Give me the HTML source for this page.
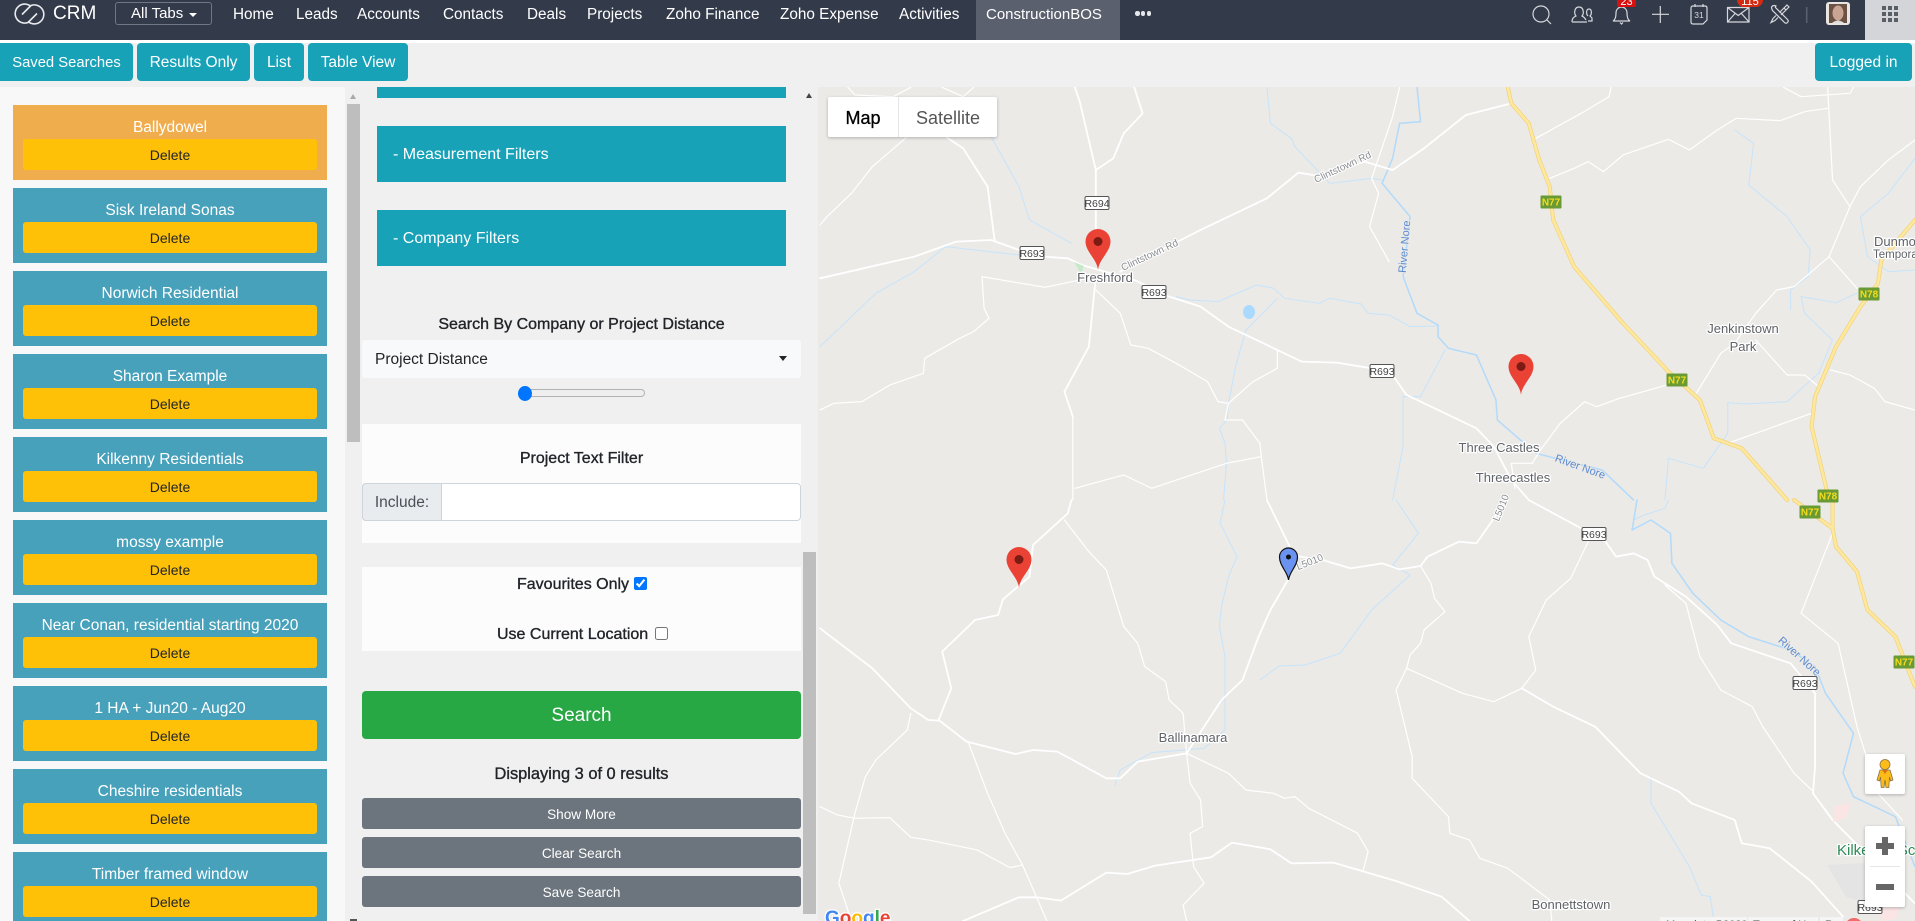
<!DOCTYPE html>
<html lang="en">
<head>
<meta charset="utf-8">
<title>ConstructionBOS</title>
<style>
html,body{margin:0;padding:0;width:1915px;height:921px;overflow:hidden;background:#f0f0f0;font-family:"Liberation Sans",sans-serif;color:#212529}
.a{position:absolute;box-sizing:border-box}
.nav{position:absolute;top:0;left:0;width:1915px;height:40px;background:#333a4a}
.nt{position:absolute;top:4px;color:#fff;font-size:15.3px;line-height:22px;white-space:nowrap}
.tb{position:absolute;top:43px;height:38px;background:#17a2b8;color:#fff;border-radius:4px;font-size:15.5px;line-height:40px;text-align:center;white-space:nowrap}
.card{position:absolute;left:13px;width:314px;height:75px;background:#47a1bb;color:#fff;font-size:15.5px;text-align:center}
.card span{position:absolute;left:0;right:0;top:13px;line-height:20px;white-space:nowrap}
.card b{position:absolute;left:10px;top:34px;width:294px;height:31px;background:#ffc107;border-radius:3px;color:#212529;font-weight:normal;font-size:14px;line-height:33px}
.teal{position:absolute;box-sizing:border-box;left:377px;width:409px;background:#17a2b8;color:#fff;font-size:16px}
.lab{position:absolute;left:362px;width:439px;text-align:center;font-size:16px;line-height:20px;-webkit-text-stroke:.35px #212529;white-space:nowrap}
.gb{position:absolute;left:362px;width:439px;height:31px;background:#6c757d;color:#fff;border-radius:3px;text-align:center;font-size:13.6px;line-height:33px}
#map polyline{fill:none;vector-effect:non-scaling-stroke;stroke-linejoin:round;stroke-linecap:round}
.w polyline{stroke:#fff;stroke-width:1.8}
.t polyline{stroke:#fff;stroke-width:1.2}
.r polyline{stroke:#c6e4fb;stroke-width:1}
.rm polyline{stroke:#b2dafb;stroke-width:1.5}
.y1 polyline{stroke:#f2d272;stroke-width:4}
.y2 polyline{stroke:#fee8a0;stroke-width:2.6}
.pl{font-family:"Liberation Sans",sans-serif;font-size:13px;fill:#5f6368;stroke:#fff;stroke-width:2.5px;paint-order:stroke;stroke-linejoin:round;text-anchor:middle}
.rv{font-size:11px;fill:#5b8ad0;stroke:#ebeae7;stroke-width:1.5px;paint-order:stroke;text-anchor:middle;font-family:"Liberation Sans",sans-serif}
.rd{font-size:10px;fill:#8a8d91;stroke:#fff;stroke-width:2px;paint-order:stroke;text-anchor:middle;font-family:"Liberation Sans",sans-serif}
.sr rect{fill:#fff;stroke:#555;stroke-width:1}
.sr text{font-size:10.5px;fill:#444;text-anchor:middle;font-family:"Liberation Sans",sans-serif}
.sn rect{fill:#6a9a33}
.sn text{font-size:10px;fill:#f5dc1c;text-anchor:middle;font-weight:bold;font-family:"Liberation Sans",sans-serif}
</style>
</head>
<body>

<div class="nav">
  <svg class="a" style="left:12px;top:2px" width="36" height="24" viewBox="0 0 36 24" fill="none" stroke="#e8e9ec" stroke-width="1.6">
    <path d="M19 4.500A9.500 9.500 0 1 0 16 20.500l9-9"/>
    <path d="M16 19.500A9.500 9.500 0 1 0 19 3.500l-9 9"/>
  </svg>
  <div class="nt" style="left:53px;top:3px;font-size:19px;line-height:22px">CRM</div>
  <div class="a" style="left:115px;top:2px;width:97px;height:23px;border:1px solid #6f7684;border-radius:3px"></div>
  <div class="nt" style="left:131px;top:3px;font-size:15px">All Tabs</div>
  <div class="a" style="left:189px;top:13px;width:0;height:0;border-left:4px solid transparent;border-right:4px solid transparent;border-top:4px solid #fff"></div>
  <div class="nt" style="left:233px">Home</div>
  <div class="nt" style="left:296px">Leads</div>
  <div class="nt" style="left:357px">Accounts</div>
  <div class="nt" style="left:443px">Contacts</div>
  <div class="nt" style="left:527px">Deals</div>
  <div class="nt" style="left:587px">Projects</div>
  <div class="nt" style="left:666px">Zoho Finance</div>
  <div class="nt" style="left:780px">Zoho Expense</div>
  <div class="nt" style="left:899px">Activities</div>
  <div class="a" style="left:976px;top:0;width:144px;height:40px;background:#5a606d"></div>
  <div class="nt" style="left:986px;font-size:15px">ConstructionBOS</div>
  <div class="a" style="left:1135px;top:11px;width:16px;height:6px;display:flex;justify-content:space-between">
    <i style="width:4.500px;height:4.500px;background:#e6e7ea;border-radius:50%"></i><i style="width:4.500px;height:4.500px;background:#e6e7ea;border-radius:50%"></i><i style="width:4.500px;height:4.500px;background:#e6e7ea;border-radius:50%"></i>
  </div>

  <svg class="a" style="left:1520px;top:0" width="345" height="40" viewBox="1520 0 345 40" fill="none" stroke="#d6d8dc" stroke-width="1.200">
    <circle cx="1541" cy="14" r="8"/><path d="M1547 20l4 4"/>
    <path d="M1572 22c0-4 2-5 4-6-2-2-2-9 3-9s5 7 3 9c2 1 3 2 4 4M1572 22h15"/><path d="M1588 16c-2-2-2-7 1-7s3 5 1 7l2 2v3h-4"/>
    <path d="M1613 21c2-1 3-3 3-8 0-4 3-6 5.500-6s5.500 2 5.500 6c0 5 1 7 3 8zM1620 22.500l1.500 1.500 1.500-1.500"/>
    <path d="M1660.300 6v17M1652 14.300h17"/>
    <path d="M1691 8q0-2 2-2h12q2 0 2 2v12l-4 4h-10q-2 0-2-2zM1695 4v3M1703 4v3"/>
    <path d="M1727.500 7.500h21.500v14.500h-21.500zM1727.500 7.500l10.700 8 10.800-8M1727.500 22l8-9M1749 22l-8-9"/>
    <path d="M1776 6c-2-1-4-.5-4.500 1.500 0 1 .5 2 1 3l12 12c1 1 2 1 3 0s1-2 0-3l-12-12c-.5-1 0-1 .5-1.500z"/>
    <path d="M1787 5l2 2-3 3-2-2zM1784 8l-4.500 4.500M1776 15.500l-3 3-2 4 4-2 3-3M1781 15l5-5"/>
    <path d="M1806.700 7v16" stroke="#5c6270" stroke-width="1.500"/>
  </svg>
  <div class="a" style="left:1693px;top:9px;width:12px;height:12px;color:#d6d8dc;font-size:8.500px;line-height:12px;text-align:center">31</div>
  <div class="a" style="left:1617px;top:0;width:19px;height:7px;background:#d80f0f;border-radius:0 0 2px 2px;overflow:hidden;color:#fff;font-size:11px;line-height:5px;text-align:center">23</div>
  <div class="a" style="left:1737px;top:0;width:26px;height:7px;background:#d42a12;border-radius:0 0 7px 7px;overflow:hidden;color:#fff;font-size:11px;line-height:5px;text-align:center">115</div>
  <svg class="a" style="left:1826px;top:2px" width="24" height="23" viewBox="0 0 24 23">
    <rect width="24" height="23" rx="3" fill="#e9e5e0"/>
    <rect x="3" y="2" width="18" height="19" fill="#6b5244"/>
    <ellipse cx="12" cy="11" rx="5.500" ry="7.500" fill="#c9a492"/>
    <path d="M6 21q6-5 12 0z" fill="#ddd"/>
  </svg>
  <div class="a" style="left:1865px;top:0;width:50px;height:40px;background:#d3d5d9"></div>
  <svg class="a" style="left:1882px;top:6px" width="16" height="16" viewBox="0 0 16 16" fill="#5a5e67">
    <rect width="4" height="4"/><rect x="6" width="4" height="4"/><rect x="12" width="4" height="4"/>
    <rect y="6" width="4" height="4"/><rect x="6" y="6" width="4" height="4"/><rect x="12" y="6" width="4" height="4"/>
    <rect y="12" width="4" height="4"/><rect x="6" y="12" width="4" height="4"/><rect x="12" y="12" width="4" height="4"/>
  </svg>
</div>
<div class="a" style="left:0;top:40px;width:1915px;height:3px;background:#fff"></div>

<div class="tb" style="left:0;width:133px;border-radius:0 4px 4px 0;font-size:14.800px">Saved Searches</div>
<div class="tb" style="left:137px;width:113px">Results Only</div>
<div class="tb" style="left:254px;width:50px">List</div>
<div class="tb" style="left:308px;width:100px">Table View</div>
<div class="tb" style="left:1815px;width:97px">Logged in</div>

<!-- left panel -->
<div class="a" style="left:0;top:87px;width:345px;height:834px;background:#f8f8f8;overflow:hidden">
  <div class="card" style="top:18px;background:#f0ad4e"><span>Ballydowel</span><b>Delete</b></div>
  <div class="card" style="top:101px"><span>Sisk Ireland Sonas</span><b>Delete</b></div>
  <div class="card" style="top:184px"><span>Norwich Residential</span><b>Delete</b></div>
  <div class="card" style="top:267px"><span>Sharon Example</span><b>Delete</b></div>
  <div class="card" style="top:350px"><span>Kilkenny Residentials</span><b>Delete</b></div>
  <div class="card" style="top:433px"><span>mossy example</span><b>Delete</b></div>
  <div class="card" style="top:516px"><span>Near Conan, residential starting 2020</span><b>Delete</b></div>
  <div class="card" style="top:599px"><span>1 HA + Jun20 - Aug20</span><b>Delete</b></div>
  <div class="card" style="top:682px"><span>Cheshire residentials</span><b>Delete</b></div>
  <div class="card" style="top:765px"><span>Timber framed window</span><b>Delete</b></div>
</div>
<div class="a" style="left:347px;top:104px;width:13px;height:338px;background:#bebebe"></div>
<div class="a" style="left:350px;top:94px;width:0;height:0;border-left:3.500px solid transparent;border-right:3.500px solid transparent;border-bottom:5px solid #a9a9a9"></div>
<div class="a" style="left:350px;top:919px;width:7px;height:2px;background:#555"></div>

<!-- middle column -->
<div class="teal" style="top:87px;height:11px"></div>
<div class="teal" style="top:126px;height:56px;line-height:58px;padding-left:16px">- Measurement Filters</div>
<div class="teal" style="top:210px;height:56px;line-height:58px;padding-left:16px">- Company Filters</div>

<div class="lab" style="top:315px">Search By Company or Project Distance</div>
<div class="a" style="left:362px;top:340px;width:439px;height:38px;background:#f8f9fa;border-radius:3px;font-size:15.500px;line-height:40px;padding-left:13px">Project Distance</div>
<div class="a" style="left:779px;top:356px;width:0;height:0;border-left:4px solid transparent;border-right:4px solid transparent;border-top:5px solid #212529"></div>
<div class="a" style="left:520px;top:389px;width:125px;height:8px;background:#efefef;border:1px solid #b2b2b2;border-radius:4px"></div>
<div class="a" style="left:518px;top:386px;width:14px;height:15px;background:#0075ff;border-radius:50%"></div>

<div class="a" style="left:362px;top:424px;width:439px;height:119px;background:#fcfcfd"></div>
<div class="lab" style="top:449px">Project Text Filter</div>
<div class="a" style="left:362px;top:483px;width:439px;height:38px;background:#fff;border:1px solid #ced4da;border-radius:4px"></div>
<div class="a" style="left:362px;top:483px;width:80px;height:38px;background:#e9ecef;border:1px solid #ced4da;border-radius:4px 0 0 4px;font-size:15.500px;line-height:38px;text-align:center;color:#495057">Include:</div>

<div class="a" style="left:362px;top:567px;width:439px;height:84px;background:#fcfcfd"></div>
<div class="lab" style="top:575px;left:517px;width:auto">Favourites Only</div>
<input class="a" type="checkbox" checked style="left:634px;top:577px;width:13px;height:13px;margin:0">
<div class="lab" style="top:625px;left:497px;width:auto">Use Current Location</div>
<input class="a" type="checkbox" style="left:655px;top:627px;width:13px;height:13px;margin:0">

<div class="a" style="left:362px;top:691px;width:439px;height:48px;background:#28a745;border-radius:4px;color:#fff;font-size:19px;line-height:50px;text-align:center">Search</div>
<div class="lab" style="top:764px;font-size:16.400px">Displaying 3 of 0 results</div>
<div class="gb" style="top:798px">Show More</div>
<div class="gb" style="top:837px">Clear Search</div>
<div class="gb" style="top:876px">Save Search</div>

<div class="a" style="left:803px;top:552px;width:13px;height:362px;background:#bebebe"></div>
<div class="a" style="left:806px;top:93px;width:0;height:0;border-left:3.500px solid transparent;border-right:3.500px solid transparent;border-bottom:5px solid #444"></div>

<!-- map -->
<svg id="map" class="a" style="left:818px;top:87px;background:#ebeae7" width="1097" height="834" viewBox="818 87 1097 834">
  <!-- Upper part, traced -->
  <g transform="translate(820,80) scale(.6983,.3333)">
    <g class="r">
      <polyline points="640,22 645,130 675,175 680,200 730,310 790,295 805,300"/>
      <polyline points="245,170 285,320 300,420 360,490"/>
      <polyline points="0,800 80,640 135,575 180,500 285,525"/>
      <polyline points="510,650 530,660 570,665 625,615 650,625 665,655 715,670 730,655 775,672 785,700 815,705 845,740 885,738"/>
      <polyline points="655,655 610,750 595,860 585,970 583,1020 572,1045 580,1090 582,1150 578,1260"/>
      <polyline points="895,810 860,950 835,950 835,1100 820,1260"/>
      <polyline points="1310,150 1337,190 1330,315 1385,410 1418,510 1415,590 1390,630 1390,690"/>
      <polyline points="1568,235 1530,340 1490,410 1500,530 1530,575 1568,570"/>
      <polyline points="1405,650 1455,668 1485,640"/>
      <polyline points="1405,650 1410,700 1450,780 1430,880 1385,965 1325,972 1300,968 1300,1060 1265,1165 1215,1135 1210,1260"/>
    </g>
    <g class="rm">
      <polyline points="855,22 860,125 830,130 820,235 805,310 845,410 835,590 855,700 885,735 885,770 900,805 940,825 968,960 970,1020 1025,1120 1120,1170 1165,1260"/>
    </g>
    <g class="t">
      <polyline points="395,630 430,700 445,795 470,805 510,850 555,905 570,965 585,970 620,905 655,865 655,810"/>
      <polyline points="232,590 322,622 395,590"/>
      <polyline points="232,590 235,685 242,715 220,755 200,775 150,835 148,880 100,915 60,965 20,970 0,990"/>
      <polyline points="125,170 75,260 45,340 10,410 0,435"/>
      <polyline points="585,970 580,1020 605,1020 630,1090 632,1130 640,1260"/>
      <polyline points="632,1130 582,1150 475,1225 435,1185 365,1225"/>
      <polyline points="830,22 820,110 790,295 800,340 787,440 815,545"/>
      <polyline points="1025,175 1090,100 1110,75 1130,50 1133,22"/>
      <polyline points="1045,295 1080,265 1100,245 1122,275 1150,225 1215,178 1245,210 1285,150 1312,115 1375,122 1410,95 1443,85"/>
      <polyline points="1443,22 1445,100 1450,300 1475,380 1445,530 1485,625"/>
      <polyline points="1475,380 1490,320 1530,240 1568,180"/>
      <polyline points="1380,22 1405,50 1475,40 1480,22"/>
      <polyline points="1445,530 1395,620 1370,630 1340,700 1310,790 1290,820 1255,940"/>
      <polyline points="1340,780 1385,885 1410,885 1430,920"/>
      <polyline points="1447,870 1475,885 1510,925 1525,965 1568,990"/>
      <polyline points="1213,915 1145,955 1112,980 1095,965 1060,1030 1030,1115 1020,1150 990,1150 995,1225"/>
      <polyline points="1300,1090 1420,1000"/>
      <polyline points="40,22 50,45 105,50 130,22"/>
      <polyline points="175,22 205,50 220,22"/>
      <polyline points="362,1010 362,1260"/>
    </g>
    <g class="w">
      <polyline points="0,595 135,530 195,485 245,480 285,510 320,530 355,535 375,555 450,600 500,650 545,680 585,740 690,845 740,848 790,865 820,885 840,945 940,1045 965,1100 990,1200 1015,1260"/>
      <polyline points="430,575 470,530 545,450 640,355 685,278 715,288 780,245 820,270 865,205 925,105 990,70"/>
      <polyline points="365,22 372,65 395,270 395,450"/>
      <polyline points="450,22 462,100 435,160 420,235 395,270"/>
      <polyline points="395,590 385,800 350,935 362,1010"/>
      <polyline points="250,480 240,320 205,205 180,170"/>
    </g>
    <g class="y1">
      <polyline points="985,22 990,70 1015,130 1030,240 1045,320 1050,420 1080,560 1150,730 1215,875 1260,960 1280,1075 1320,1105 1385,1260"/>
      <polyline points="1568,420 1520,540 1515,610 1490,680 1455,800 1425,950 1420,1040 1445,1260"/>
    </g>
    <g class="y2">
      <polyline points="985,22 990,70 1015,130 1030,240 1045,320 1050,420 1080,560 1150,730 1215,875 1260,960 1280,1075 1320,1105 1385,1260"/>
      <polyline points="1568,420 1520,540 1515,610 1490,680 1455,800 1425,950 1420,1040 1445,1260"/>
    </g>
  </g>
  <!-- Lower part, traced -->
  <g transform="translate(820,500) scale(.6983,.3333)">
    <g class="r">
      <polyline points="580,0 573,70 597,170 585,230 575,320 572,380 580,470 580,690 550,745 475,758 430,810 422,855"/>
      <polyline points="825,0 857,100 820,195 845,225 790,330 745,460 695,495 658,498 630,540"/>
      <polyline points="1190,830 1190,910 1245,1100 1262,1185 1275,1190 1280,1263"/>
      <polyline points="1215,0 1210,25 1180,45 1165,60"/>
    </g>
    <g class="rm">
      <polyline points="1170,0 1163,90 1190,60 1218,100 1220,190 1250,280 1290,360 1330,410 1390,450 1425,500 1440,580 1480,700 1465,820 1480,890 1540,950 1568,1100"/>
    </g>
    <g class="t">
      <polyline points="350,60 385,155 410,210 435,380 455,430 465,500 495,545 500,600 520,640 525,760"/>
      <polyline points="130,640 125,690 80,780 65,830 50,940 27,1150 45,1263"/>
      <polyline points="212,725 240,880 265,1000 290,1095 325,1263"/>
      <polyline points="0,920 25,945 50,955 100,953 130,1012 155,1020 225,1050 272,1103 290,1095"/>
      <polyline points="840,505 920,580 965,605 1005,565 1025,510 1015,410 1040,300 1075,235 1100,125"/>
      <polyline points="1210,255 1240,310 1260,470 1290,570 1335,620 1350,680 1395,820 1420,870"/>
      <polyline points="1450,100 1405,340 1458,430 1485,680 1515,880 1550,960"/>
      <polyline points="525,760 530,850 545,900 548,980 530,1000 535,1100 550,1150 520,1215 525,1263"/>
      <polyline points="525,760 585,820 610,870 650,880 665,895 680,890 700,925 770,1000 785,1055 778,1110"/>
      <polyline points="860,198 875,250 880,295 895,335 865,390 860,430 845,465 840,505 825,570 848,770 848,835 900,950 902,1000 930,1020 945,1075 985,1105 1045,1200 1048,1263"/>
    </g>
    <g class="w">
      <polyline points="360,0 355,40 305,135 300,230 262,298 255,345 222,360 175,455 188,565 170,660 210,725 280,762 305,750 340,755 410,835 430,835 455,785 525,760"/>
      <polyline points="0,385 75,505 130,625 155,660 170,662"/>
      <polyline points="640,0 675,150 670,240 645,330 628,410 605,540 575,600 525,760"/>
      <polyline points="672,165 720,180 760,205 805,190 830,208 860,198 870,170 915,125 940,130 970,40 985,0"/>
      <polyline points="1005,565 1050,620 1110,680 1175,820 1230,875 1248,910 1310,960 1320,1030 1360,1045 1420,1145 1465,1250"/>
      <polyline points="1015,0 1090,85 1125,125 1140,170 1165,160 1185,180 1195,230 1240,290 1285,375 1305,430 1390,490 1425,580 1425,800 1422,880 1450,960 1530,1130 1568,1210"/>
      <polyline points="205,1263 285,1192 310,1192 345,1202 410,1118 440,1122 480,1097 560,1072 590,1028 645,1048 675,1090 735,1088 825,1143 890,1190 930,1263"/>
    </g>
    <g class="y1">
      <polyline points="1395,0 1450,85 1455,140 1485,215 1500,330 1540,410 1568,560"/>
      <polyline points="1450,0 1450,85"/>
    </g>
    <g class="y2">
      <polyline points="1395,0 1450,85 1455,140 1485,215 1500,330 1540,410 1568,560"/>
      <polyline points="1450,0 1450,85"/>
    </g>
  </g>

  <ellipse cx="1249" cy="312" rx="6" ry="7" fill="#aadaff"/>
  <path d="M1074 262l10 4-3 8z" fill="#c6e9c8"/>
  <path d="M1834 806l17-3-5 15-13 4z" fill="#fbe4e4"/>
  <path d="M1878 909l22-2-4 12-14 2z" fill="#fbe4e4"/>
  <path d="M1827 865l38-2 1 40-20-6z" fill="#e4e4e4"/>

  <!-- labels -->
  <text class="pl" x="1105" y="282">Freshford</text>
  <text class="pl" x="1499" y="452">Three Castles</text>
  <text class="pl" x="1513" y="482">Threecastles</text>
  <text class="pl" x="1743" y="333">Jenkinstown</text>
  <text class="pl" x="1743" y="351">Park</text>
  <text class="pl" x="1874" y="246" style="text-anchor:start">Dunmore</text>
  <text class="pl" x="1873" y="258" style="text-anchor:start;font-size:11.500px">Temporary</text>
  <text class="pl" x="1193" y="742">Ballinamara</text>
  <text class="pl" x="1571" y="909">Bonnettstown</text>
  <text class="pl" x="1837" y="855" style="text-anchor:start;fill:#2e8b57;font-size:15px">Kilkenny School</text>

  <text class="rv" transform="translate(1408,247) rotate(-85)">River Nore</text>
  <text class="rv" transform="translate(1579,470) rotate(20)">River Nore</text>
  <text class="rv" transform="translate(1797,659) rotate(42)">River Nore</text>
  <text class="rd" transform="translate(1344,170) rotate(-25)">Clintstown Rd</text>
  <text class="rd" transform="translate(1151,258) rotate(-25)">Clintstown Rd</text>
  <text class="rd" transform="translate(1311,565) rotate(-22)">L5010</text>
  <text class="rd" transform="translate(1504,509) rotate(-68)">L5010</text>

  <g class="sr">
    <g transform="translate(1097,203)"><rect x="-12" y="-6.500" width="24" height="13" rx="1.500"/><text y="4">R694</text></g>
    <g transform="translate(1032,253)"><rect x="-12" y="-6.500" width="24" height="13" rx="1.500"/><text y="4">R693</text></g>
    <g transform="translate(1154,292)"><rect x="-12" y="-6.500" width="24" height="13" rx="1.500"/><text y="4">R693</text></g>
    <g transform="translate(1382,371)"><rect x="-12" y="-6.500" width="24" height="13" rx="1.500"/><text y="4">R693</text></g>
    <g transform="translate(1594,534)"><rect x="-12" y="-6.500" width="24" height="13" rx="1.500"/><text y="4">R693</text></g>
    <g transform="translate(1805,683)"><rect x="-12" y="-6.500" width="24" height="13" rx="1.500"/><text y="4">R693</text></g>
    <g transform="translate(1870,907)"><rect x="-12" y="-6.500" width="24" height="13" rx="1.500"/><text y="4">R693</text></g>
  </g>
  <g class="sn">
    <g transform="translate(1551,202)"><rect x="-10.500" y="-6.500" width="21" height="13" rx="1"/><text y="3.500">N77</text></g>
    <g transform="translate(1677,380)"><rect x="-10.500" y="-6.500" width="21" height="13" rx="1"/><text y="3.500">N77</text></g>
    <g transform="translate(1810,512)"><rect x="-10.500" y="-6.500" width="21" height="13" rx="1"/><text y="3.500">N77</text></g>
    <g transform="translate(1904,662)"><rect x="-10.500" y="-6.500" width="21" height="13" rx="1"/><text y="3.500">N77</text></g>
    <g transform="translate(1869,294)"><rect x="-10.500" y="-6.500" width="21" height="13" rx="1"/><text y="3.500">N78</text></g>
    <g transform="translate(1828,496)"><rect x="-10.500" y="-6.500" width="21" height="13" rx="1"/><text y="3.500">N78</text></g>
  </g>

  <!-- pins -->
  <g fill="#ea4335">
    <g transform="translate(1085.500,229)"><path d="M12.500 41C11.500 30 0 23 0 12.500A12.500 12.500 0 0 1 25 12.500C25 23 13.500 30 12.500 41Z"/><circle cx="12.500" cy="12.500" r="4.500" fill="#7c1a14"/></g>
    <g transform="translate(1508.500,354)"><path d="M12.500 41C11.500 30 0 23 0 12.500A12.500 12.500 0 0 1 25 12.500C25 23 13.500 30 12.500 41Z"/><circle cx="12.500" cy="12.500" r="4.500" fill="#7c1a14"/></g>
    <g transform="translate(1006.500,547)"><path d="M12.500 41C11.500 30 0 23 0 12.500A12.500 12.500 0 0 1 25 12.500C25 23 13.500 30 12.500 41Z"/><circle cx="12.500" cy="12.500" r="4.500" fill="#7c1a14"/></g>
    <g transform="translate(1279.500,548)"><path d="M9 32C8.300 24 0 18 0 9A9 9 0 0 1 18 9C18 18 9.700 24 9 32Z" fill="#6a92f0" stroke="#111" stroke-width="1.200"/><circle cx="9" cy="9" r="2.500" fill="#111"/></g>
  </g>

  <!-- google logo -->
  <text x="825" y="924" style="font-family:'Liberation Sans',sans-serif;font-size:19px;font-weight:bold;stroke:#fff;stroke-width:2.500px;paint-order:stroke"><tspan fill="#4285f4">G</tspan><tspan fill="#ea4335">o</tspan><tspan fill="#fbbc05">o</tspan><tspan fill="#4285f4">g</tspan><tspan fill="#34a853">l</tspan><tspan fill="#ea4335">e</tspan></text>

  <!-- bottom attribution -->
  <rect x="1660" y="917" width="87" height="4" fill="#f5f5f5"/>
  <rect x="1748" y="917" width="70" height="4" fill="#f5f5f5"/>
  <rect x="1820" y="917" width="23" height="4" fill="#f5f5f5"/>
  <text x="1666" y="928" style="font-family:'Liberation Sans',sans-serif;font-size:11px" fill="#444">Map data ©2020</text>
  <text x="1753" y="928" style="font-family:'Liberation Sans',sans-serif;font-size:11px" fill="#444">Terms of Use</text>
  <text x="1825" y="928" style="font-family:'Liberation Sans',sans-serif;font-size:11px" fill="#444">Re</text>
  <circle cx="1854" cy="927" r="9" fill="#f26a6a"/>
</svg>

<!-- Map controls -->
<div class="a" style="left:828px;top:97px;width:169px;height:40px;background:#fff;border-radius:2px;box-shadow:0 1px 3px rgba(0,0,0,.25)"></div>
<div class="a" style="left:898px;top:97px;width:1px;height:40px;background:#e6e6e6"></div>
<div class="a" style="left:828px;top:97px;width:70px;height:40px;text-align:center;font-size:18px;line-height:42px;color:#000;font-weight:500;-webkit-text-stroke:.3px #000">Map</div>
<div class="a" style="left:899px;top:97px;width:98px;height:40px;text-align:center;font-size:18px;line-height:42px;color:#565656">Satellite</div>

<div class="a" style="left:1865px;top:754px;width:40px;height:40px;background:#fff;border-radius:2px;box-shadow:0 1px 3px rgba(0,0,0,.25)"></div>
<svg class="a" style="left:1875px;top:758px" width="20" height="32" viewBox="0 0 20 32">
  <circle cx="10" cy="6.500" r="5" fill="#fbbc1a" stroke="#8a7040" stroke-width=".8"/>
  <path d="M5 12h10l3 10-2.500 1-1-4-.7 10.500H11L10 22l-1 7.500H6.200L5.500 19l-1 4L2 22z" fill="#fbbc1a" stroke="#8a7040" stroke-width=".8"/>
  <path d="M7 12l3 4 3-4z" fill="#d9731a"/>
</svg>

<div class="a" style="left:1865px;top:826px;width:40px;height:81px;background:#fff;border-radius:2px;box-shadow:0 1px 3px rgba(0,0,0,.25)"></div>
<div class="a" style="left:1876px;top:843px;width:18px;height:6px;background:#666"></div>
<div class="a" style="left:1882px;top:837px;width:6px;height:18px;background:#666"></div>
<div class="a" style="left:1870px;top:866px;width:30px;height:1px;background:#e6e6e6"></div>
<div class="a" style="left:1876px;top:884px;width:18px;height:6px;background:#666"></div>

</body>
</html>
